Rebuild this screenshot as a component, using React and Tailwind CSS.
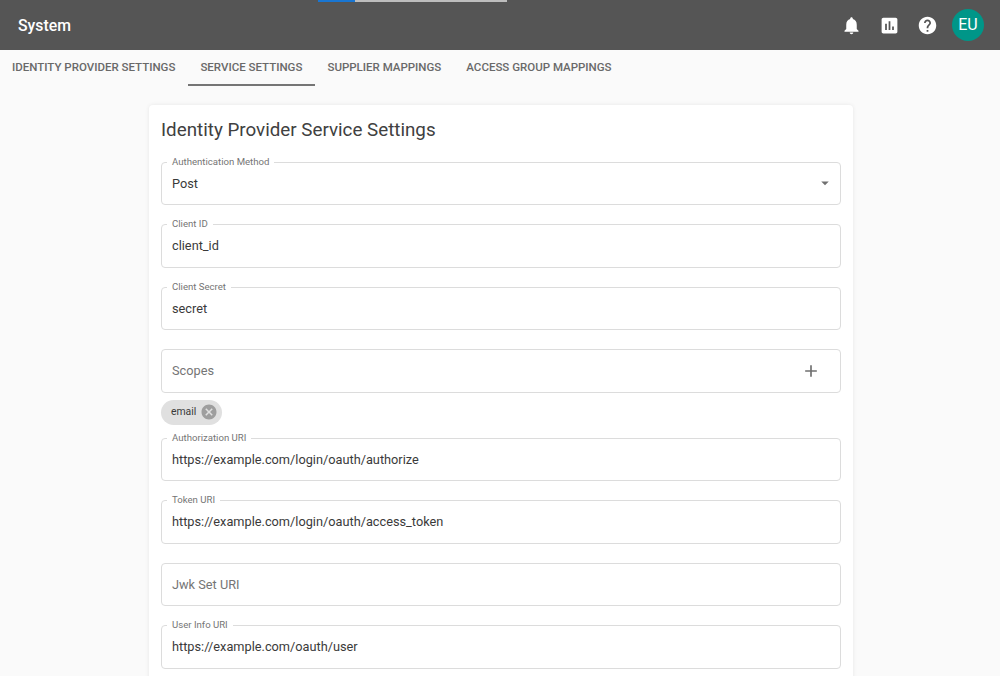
const tabs = ['Identity Provider Settings', 'Service Settings', 'Supplier Mappings', 'Access Group Mappings'];

const iconPaths = {
  bell: 'M12 22c1.1 0 2-.9 2-2h-4c0 1.1.89 2 2 2zm6-6v-5c0-3.07-1.64-5.64-4.5-6.32V4c0-.83-.67-1.5-1.5-1.5s-1.5.67-1.5 1.5v.68C7.63 5.36 6 7.92 6 11v5l-2 2v1h16v-1l-2-2z',
  chart: 'M19 3H5c-1.1 0-2 .9-2 2v14c0 1.1.9 2 2 2h14c1.1 0 2-.9 2-2V5c0-1.1-.9-2-2-2zM9 17H7v-7h2v7zm4 0h-2V7h2v10zm4 0h-2v-4h2v4z',
  help: 'M12 2C6.48 2 2 6.48 2 12s4.48 10 10 10 10-4.48 10-10S17.52 2 12 2zm1 17h-2v-2h2v2zm2.07-7.75l-.9.92C13.45 12.9 13 13.5 13 15h-2v-.5c0-1.1.45-2.1 1.17-2.83l1.24-1.26c.37-.36.59-.86.59-1.41 0-1.1-.9-2-2-2s-2 .9-2 2H8c0-2.21 1.79-4 4-4s4 1.79 4 4c0 .88-.36 1.68-.93 2.25z',
  cancel: 'M12 2C6.47 2 2 6.47 2 12s4.47 10 10 10 10-4.47 10-10S17.53 2 12 2zm5 13.59L15.59 17 12 13.41 8.41 17 7 15.59 10.59 12 7 8.41 8.41 7 12 10.59 15.59 7 17 8.41 13.41 12 17 15.59z',
  add: 'M19 13h-6v6h-2v-6H5v-2h6V5h2v6h6v2z',
  arrow: 'M7 10l5 5 5-5z',
};

function Icon({ name, className }) {
  return (
    <svg viewBox="0 0 24 24" fill="currentColor" className={className}>
      <path d={iconPaths[name]} />
    </svg>
  );
}

function Field({ label, value, placeholder, icon }) {
  return (
    <div className="relative h-[43.5px] flex items-center justify-between pl-[11px] pr-[17px] text-[12.75px] leading-none">
      <fieldset className="absolute inset-x-0 bottom-0 top-[-5px] border border-[#dcdcdc] rounded-[4px] px-[5px] pointer-events-none">
        <legend className={`h-[11px] text-[9.6px] leading-[9px] text-[#757575] whitespace-nowrap ${label ? 'px-[5px]' : ''}`}>{label}</legend>
      </fieldset>
      {value ? (
        <span className="pt-[2px] text-[#3a3a3a]">{value}</span>
      ) : (
        <span className="pt-[2px] text-[#757575]">{placeholder}</span>
      )}
      {icon}
    </div>
  );
}

export default function App() {
  return (
    <div className="relative h-screen overflow-hidden bg-[#fafafa] font-['Roboto',sans-serif]">
      <div className="absolute top-0 left-[318px] flex h-[2px] w-[189px]">
        <div className="w-[37px] bg-[#1976d2]" />
        <div className="flex-1 bg-[#bdbdbd]" />
      </div>

      <header className="h-[50px] bg-[#555555] flex items-center justify-between pl-[18px] pr-[16px] text-white">
        <h1 className="text-[15.8px] font-medium pt-[1px]">System</h1>
        <div className="flex items-center">
          <Icon name="bell" className="w-[21px] h-[21px]" />
          <Icon name="chart" className="w-[21px] h-[21px] ml-[17px]" />
          <Icon name="help" className="w-[21px] h-[21px] ml-[17px]" />
          <div className="w-[32px] h-[32px] ml-[14px] rounded-full bg-[#009688] flex items-center justify-center text-[16px]">EU</div>
        </div>
      </header>

      <nav className="flex h-[36px] -ml-[0.5px]">
        {tabs.map((tab, i) => (
          <div
            key={tab}
            className={`px-[12.5px] pt-[9.5px] text-[11.5px] font-medium uppercase leading-[14px] text-[#696969] whitespace-nowrap ${i === 1 ? 'border-b-2 border-[#757575]' : ''}`}
          >
            {tab}
          </div>
        ))}
      </nav>

      <main className="mt-[19px] ml-[149px] w-[704px] bg-white rounded-[4px] shadow-[0_0_4px_rgba(0,0,0,0.08)] px-[12px] pt-[12px] pb-[20px]">
        <h2 className="text-[18.8px] leading-[26px] text-[#404040] mb-[18.5px]">Identity Provider Service Settings</h2>
        <div className="flex flex-col gap-[19px]">
          <Field
            label="Authentication Method"
            value="Post"
            icon={<Icon name="arrow" className="w-[18px] h-[18px] text-[#707070] -mr-[9.5px]" />}
          />
          <Field label="Client ID" value="client_id" />
          <Field label="Client Secret" value="secret" />
          <div>
            <Field placeholder="Scopes" icon={<Icon name="add" className="w-[20px] h-[20px] text-[#707070] mr-[3px]" />} />
            <div className="mt-[7px] inline-flex items-center h-[25px] rounded-full bg-[#e0e0e0] pl-[10px] pr-[4px] text-[10.4px] text-[#3a3a3a]">
              email
              <Icon name="cancel" className="w-[18px] h-[18px] ml-[4px] text-[#9e9e9e]" />
            </div>
          </div>
          <div className="-mt-[6px]">
            <Field label="Authorization URI" value="https://example.com/login/oauth/authorize" />
          </div>
          <Field label="Token URI" value="https://example.com/login/oauth/access_token" />
          <Field placeholder="Jwk Set URI" />
          <Field label="User Info URI" value="https://example.com/oauth/user" />
        </div>
      </main>
    </div>
  );
}
